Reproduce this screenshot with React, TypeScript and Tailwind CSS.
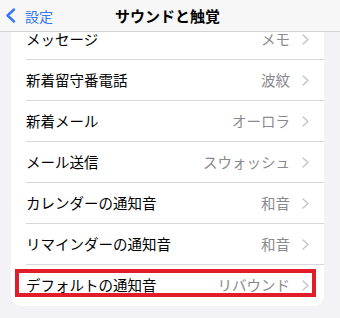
const rows = [
  { label: "メッセージ", value: "メモ" },
  { label: "新着留守番電話", value: "波紋" },
  { label: "新着メール", value: "オーロラ" },
  { label: "メール送信", value: "スウォッシュ" },
  { label: "カレンダーの通知音", value: "和音" },
  { label: "リマインダーの通知音", value: "和音" },
  { label: "デフォルトの通知音", value: "リバウンド", marked: true },
];

function Chevron() {
  return (
    <svg width="7" height="11" viewBox="0 0 7 11" className="shrink-0">
      <polyline
        points="1,1 6,5.5 1,10"
        fill="none"
        stroke="#c4c4c7"
        strokeWidth="1.4"
        strokeLinecap="round"
        strokeLinejoin="round"
      />
    </svg>
  );
}

export default function App() {
  return (
    <div
      className="w-[340px] h-[318px] bg-[#f2f2f7] overflow-hidden"
      style={{ fontFamily: '"Noto Sans CJK JP", "Noto Sans", sans-serif' }}
    >
      <div className="relative z-10 h-[32px] bg-[#f7f7f7] border-b border-[#d2d2d4] flex items-center">
        <div className="flex items-center gap-[9px] pl-[5px] text-[#3478f6]">
          <svg width="11" height="15" viewBox="0 0 11 15">
            <polyline
              points="9,1.5 2.5,7.5 9,13.5"
              fill="none"
              stroke="#3478f6"
              strokeWidth="2.4"
              strokeLinecap="round"
              strokeLinejoin="round"
            />
          </svg>
          <span className="text-[14px] leading-none">設定</span>
        </div>
        <div className="absolute left-0 right-0 text-center text-[15px] font-bold text-black leading-none pointer-events-none pr-[5px]">
          サウンドと触覚
        </div>
      </div>

      <div className="-mt-[13px] ml-[11px] w-[313px] bg-white rounded-b-[10px]">
        {rows.map((r, i) => (
          <div key={r.label} className="relative pl-[15px]">
            <div
              className={`h-[41px] flex items-center pr-[15px] ${
                i < rows.length - 1 ? "border-b border-[#d8d8dc]" : "pb-[1px]"
              }`}
            >
              <span className="flex-1 text-[14.5px] text-black leading-none">
                {r.label}
              </span>
              <span className="text-[14.5px] text-[#8a8a8e] leading-none mr-[12px]">
                {r.value}
              </span>
              <Chevron />
            </div>
            {r.marked && (
              <div className="absolute left-[4px] top-[4px] w-[301px] h-[28px] border-[4px] border-[#e11d2a]" />
            )}
          </div>
        ))}
      </div>
    </div>
  );
}
